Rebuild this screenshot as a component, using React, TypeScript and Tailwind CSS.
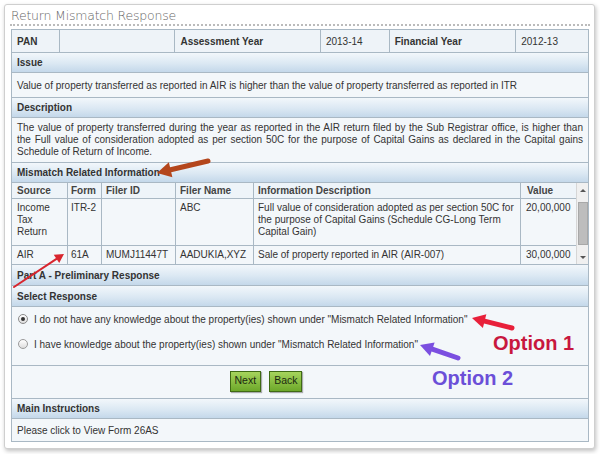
import React from "react";

const hdr =
  "h-[20px] flex items-center px-[5px] border-b border-[#a9b8c4] bg-[linear-gradient(#f2f7fb,#dbe8f3_55%,#c4d8ea)] font-bold text-[#333]";

const pan = [
  { t: "PAN", w: "w-[48px]", b: true },
  { t: "", w: "w-[116px]", b: false },
  { t: "Assessment Year", w: "w-[146px]", b: true },
  { t: "2013-14", w: "w-[69px]", b: false },
  { t: "Financial Year", w: "w-[127px]", b: true },
  { t: "2012-13", w: "w-[72px]", b: false },
];

const rows = [
  {
    src: ["Income", "Tax", "Return"],
    form: "ITR-2",
    id: "",
    name: "ABC",
    desc: "Full value of consideration adopted as per section 50C for the purpose of Capital Gains (Schedule CG-Long Term Capital Gain)",
    value: "20,00,000",
    h: "h-[47px]",
  },
  {
    src: ["AIR"],
    form: "61A",
    id: "MUMJ11447T",
    name: "AADUKIA,XYZ",
    desc: "Sale of property reported in AIR (AIR-007)",
    value: "30,00,000",
    h: "h-[18px]",
  },
];

function Arrow({ x1, y1, x2, y2, color, w, head }: { x1: number; y1: number; x2: number; y2: number; color: string; w: number; head: number }) {
  const dx = x2 - x1;
  const dy = y2 - y1;
  const len = Math.hypot(dx, dy);
  const ux = dx / len;
  const uy = dy / len;
  const bx = x2 - ux * head;
  const by = y2 - uy * head;
  const px = -uy * head * 0.55;
  const py = ux * head * 0.55;
  return (
    <g>
      <path d={`M${x1} ${y1} L${bx} ${by}`} stroke={color} strokeWidth={w} strokeLinecap="round" fill="none" />
      <polygon points={`${x2},${y2} ${bx + px},${by + py} ${bx - px},${by - py}`} fill={color} />
    </g>
  );
}

export default function App() {
  return (
    <div className="relative w-[600px] h-[454px] bg-white font-['Liberation_Sans',Arial,sans-serif] text-[10px] text-[#333]">
      <div className="absolute left-[4px] top-[4px] w-[591px] h-[445px] rounded-[3px] border border-[#cfcfcf] bg-white shadow-[1px_2px_4px_rgba(0,0,0,0.25)]" />
      <div className="relative pt-[8px] px-[11px]">
        <div className="text-[12.5px] leading-[15px] font-['DejaVu_Sans',sans-serif] font-light text-[#666] tracking-[-0.2px] pb-[1px] border-b-2 border-dotted border-[#bbb] -mx-[1px] pl-[1px]">
          Return Mismatch Response
        </div>
        <div className="mt-[3px] w-[578px] border-x border-t border-[#a9b8c4] bg-[#f3f7fa]">
          {/* PAN row */}
          <div className="flex h-[23px] border-b border-[#a9b8c4] bg-[#eef3f8]">
            {pan.map((c, i) => (
              <div
                key={i}
                className={`${c.w} flex items-center px-[5px] ${i < pan.length - 1 ? "border-r border-[#a9b8c4]" : ""} ${c.b ? "font-bold" : ""}`}
              >
                {c.t}
              </div>
            ))}
          </div>

          <div className={hdr}>Issue</div>
          <div className="h-[25px] flex items-center px-[5px] border-b border-[#a9b8c4]">
            Value of property transferred as reported in AIR is higher than the value of property transferred as reported in ITR
          </div>

          <div className={hdr}>Description</div>
          <div className="h-[45px] px-[5px] pt-[4px] leading-[12px] text-justify border-b border-[#a9b8c4]">
            The value of property transferred during the year as reported in the AIR return filed by the Sub Registrar office, is higher than the Full value of consideration adopted as per section 50C for the purpose of Capital Gains as declared in the Capital gains Schedule of Return of Income.
          </div>

          <div className={hdr}>Mismatch Related Information</div>
          <div className="flex border-b border-[#a9b8c4]">
            <div className="w-[564px]">
              <div className="flex h-[16px] font-bold text-[#444] border-b border-[#a9b8c4] bg-[#eef4f9]">
                <div className="w-[56px] px-[5px] border-r border-[#a9b8c4] flex items-center">Source</div>
                <div className="w-[34px] px-[3px] border-r border-[#a9b8c4] flex items-center">Form</div>
                <div className="w-[74px] px-[4px] border-r border-[#a9b8c4] flex items-center">Filer ID</div>
                <div className="w-[78px] px-[4px] border-r border-[#a9b8c4] flex items-center">Filer Name</div>
                <div className="w-[267px] px-[4px] border-r border-[#a9b8c4] flex items-center">Information Description</div>
                <div className="w-[55px] px-[6px] flex items-center">Value</div>
              </div>
              {rows.map((r, i) => (
                <div key={i} className={`flex ${r.h} leading-[12px] ${i === 0 ? "border-b border-[#a9b8c4]" : ""}`}>
                  <div className="w-[56px] px-[5px] pt-[3px] border-r border-[#a9b8c4]">
                    {r.src.map((s) => (
                      <div key={s}>{s}</div>
                    ))}
                  </div>
                  <div className="w-[34px] px-[3px] pt-[3px] border-r border-[#a9b8c4] whitespace-nowrap">{r.form}</div>
                  <div className="w-[74px] px-[4px] pt-[3px] border-r border-[#a9b8c4]">{r.id}</div>
                  <div className="w-[78px] px-[4px] pt-[3px] border-r border-[#a9b8c4] whitespace-nowrap">{r.name}</div>
                  <div className="w-[267px] px-[4px] pt-[3px] border-r border-[#a9b8c4]">{r.desc}</div>
                  <div className="w-[55px] px-[5px] pt-[3px]">{r.value}</div>
                </div>
              ))}
            </div>
            {/* scrollbar */}
            <div className="w-[14px] flex flex-col items-center bg-[#f0f0f0] border-l border-[#d6d6d6]">
              <div className="h-[14px] flex items-center justify-center">
                <div className="w-0 h-0 border-x-[3px] border-x-transparent border-b-[3px] border-b-[#555]" />
              </div>
              <div className="w-[10px] flex-1 my-[5px] bg-[#bdbdbd] border border-[#a8a8a8]" />
              <div className="h-[14px] flex items-center justify-center">
                <div className="w-0 h-0 border-x-[3px] border-x-transparent border-t-[3px] border-t-[#555]" />
              </div>
            </div>
          </div>

          <div className={`${hdr} h-[21px]`}>Part A - Preliminary Response</div>
          <div className={`${hdr} h-[21px]`}>Select Response</div>
          <div className="h-[59px] flex flex-col gap-[13px] pt-[6px] px-[6px] border-b border-[#a9b8c4]">
            <label className="h-[12px] flex items-center gap-[6px]">
              <span className="w-[10px] h-[10px] rounded-full border border-[#8a8a8a] bg-[linear-gradient(#fff,#ddd)] flex items-center justify-center">
                <span className="w-[4px] h-[4px] rounded-full bg-[#333]" />
              </span>
              I do not have any knowledge about the property(ies) shown under "Mismatch Related Information"
            </label>
            <label className="h-[12px] flex items-center gap-[6px]">
              <span className="w-[10px] h-[10px] rounded-full border border-[#9a9a9a] bg-[linear-gradient(#fff,#ddd)]" />
              I have knowledge about the property(ies) shown under "Mismatch Related Information"
            </label>
          </div>
          <div className="h-[33px] flex items-center justify-center gap-[8px] pr-[68px] pb-[2px] border-b border-[#a9b8c4]">
            <button className="h-[21px] px-[4px] text-[10.5px] text-[#1c2a10] border border-[#3f6a14] bg-[linear-gradient(#a6d45c,#6da82a)] shadow-[1px_1px_1px_rgba(0,0,0,0.3)]">
              Next
            </button>
            <button className="h-[21px] px-[4px] text-[10.5px] text-[#1c2a10] border border-[#3f6a14] bg-[linear-gradient(#a6d45c,#6da82a)] shadow-[1px_1px_1px_rgba(0,0,0,0.3)]">
              Back
            </button>
          </div>
          <div className={hdr}>Main Instructions</div>
          <div className="h-[23px] flex items-center px-[5px] border-b border-[#a9b8c4]">Please click to View Form 26AS</div>
        </div>
      </div>

      {/* annotations */}
      <svg className="absolute inset-0 pointer-events-none" width="600" height="454">
        <Arrow x1={208} y1={161} x2={157} y2={173} color="#b4461c" w={5} head={14} />
        <Arrow x1={14} y1={287} x2={64} y2={254} color="#d8262e" w={2} head={9} />
        <Arrow x1={512} y1={328} x2={472} y2={318} color="#e8203a" w={5} head={13} />
        <Arrow x1={458} y1={358} x2={420} y2={345} color="#7b4fe0" w={5} head={13} />
      </svg>
      <div className="absolute left-[493px] top-[328px] text-[20px] font-bold font-['Liberation_Sans',Arial,sans-serif] text-[#c8173e]">
        Option 1
      </div>
      <div className="absolute left-[432px] top-[363px] text-[20px] font-bold font-['Liberation_Sans',Arial,sans-serif] text-[#6b4fd8]">
        Option 2
      </div>
    </div>
  );
}
